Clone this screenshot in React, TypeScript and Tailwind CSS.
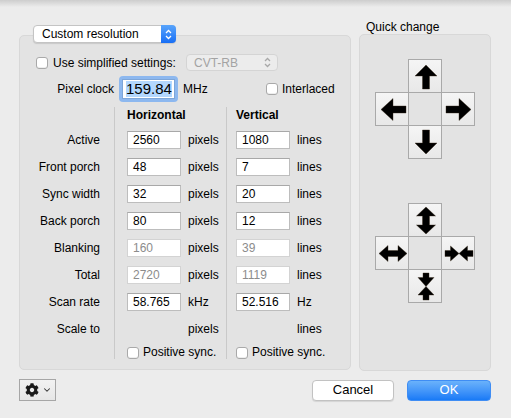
import { ChevronDown } from 'lucide-react'
import { FaCog } from 'react-icons/fa'

type Row = {
  label: string
  h?: string
  v?: string
  hUnit: string
  vUnit: string
  disabled?: boolean
}

const rows: Row[] = [
  { label: 'Active', h: '2560', v: '1080', hUnit: 'pixels', vUnit: 'lines' },
  { label: 'Front porch', h: '48', v: '7', hUnit: 'pixels', vUnit: 'lines' },
  { label: 'Sync width', h: '32', v: '20', hUnit: 'pixels', vUnit: 'lines' },
  { label: 'Back porch', h: '80', v: '12', hUnit: 'pixels', vUnit: 'lines' },
  { label: 'Blanking', h: '160', v: '39', hUnit: 'pixels', vUnit: 'lines', disabled: true },
  { label: 'Total', h: '2720', v: '1119', hUnit: 'pixels', vUnit: 'lines', disabled: true },
  { label: 'Scan rate', h: '58.765', v: '52.516', hUnit: 'kHz', vUnit: 'Hz' },
  { label: 'Scale to', hUnit: 'pixels', vUnit: 'lines' },
]

function Checkbox() {
  return (
    <span className="block w-[12px] h-[12px] shrink-0 rounded-[3px] bg-white border border-[#a9a9a9] shadow-[inset_0_-1px_0_#eeeeee]" />
  )
}

function Stepper({ color }: { color: string }) {
  return (
    <svg width="7" height="11" viewBox="0 0 7 11" fill="none" stroke={color} strokeWidth="1.3">
      <path d="M1 4 L3.5 1.5 L6 4" />
      <path d="M1 7 L3.5 9.5 L6 7" />
    </svg>
  )
}

function Field({ value, disabled }: { value?: string; disabled?: boolean }) {
  if (value === undefined) return <span className="block w-[54px] h-[18px]" />
  return (
    <span
      className={
        disabled
          ? 'flex items-center w-[54px] h-[18px] pl-[5px] bg-white border border-[#d3d3d3] text-[#8c8c8c]'
          : 'flex items-center w-[54px] h-[18px] pl-[5px] bg-white border border-[#bdbdbd] border-t-[#a8a8a8] text-black'
      }
    >
      {value}
    </span>
  )
}

// arrows drawn in a 34x33 button box
function Arrow({ kind }: { kind: string }) {
  const paths: Record<string, string> = {
    up: 'M17 5 L28 16 L20.5 16 L20.5 29 L13.5 29 L13.5 16 L6 16 Z',
    down: 'M17 28 L28 17 L20.5 17 L20.5 4 L13.5 4 L13.5 17 L6 17 Z',
    left: 'M5 16.5 L17 5.5 L17 13 L30 13 L30 20 L17 20 L17 27.5 Z',
    right: 'M29 16.5 L17 5.5 L17 13 L4 13 L4 20 L17 20 L17 27.5 Z',
    vgrow: 'M17 3 L26.5 12 L20.5 12 L20.5 21 L26.5 21 L17 30 L7.5 21 L13.5 21 L13.5 12 L7.5 12 Z',
    hgrow: 'M3 16.5 L12 8.5 L12 13.5 L22 13.5 L22 8.5 L31 16.5 L22 24.5 L22 19.5 L12 19.5 L12 24.5 Z',
    hshrink:
      'M17 16.5 L8.5 9 L8.5 13.5 L3 13.5 L3 19.5 L8.5 19.5 L8.5 24 Z M17 16.5 L25.5 9 L25.5 13.5 L31 13.5 L31 19.5 L25.5 19.5 L25.5 24 Z',
    vshrink:
      'M17 16.5 L9 7.5 L14 7.5 L14 3 L20 3 L20 7.5 L25 7.5 Z M17 16.5 L9 25 L14 25 L14 30 L20 30 L20 25 L25 25 Z',
  }
  return (
    <svg width="34" height="33" viewBox="0 0 34 33" className="block">
      <path d={paths[kind]} fill="#000" stroke="#3a2a1a" strokeWidth="0.4" />
    </svg>
  )
}

function ArrowButton({ kind, cls }: { kind: string; cls: string }) {
  return (
    <div
      className={`${cls} w-[34px] h-[34px] -mb-px -mr-px border border-[#a9a9a9] bg-gradient-to-b from-[#f5f5f5] to-[#e8e8e8] overflow-hidden`}
    >
      <Arrow kind={kind} />
    </div>
  )
}

function Cluster({ kinds }: { kinds: [string, string, string, string] }) {
  return (
    <div className="grid grid-cols-[33px_33px_33px] grid-rows-[33px_33px_33px] w-[100px]">
      <ArrowButton kind={kinds[0]} cls="col-start-2 row-start-1" />
      <ArrowButton kind={kinds[1]} cls="col-start-1 row-start-2" />
      <ArrowButton kind={kinds[2]} cls="col-start-3 row-start-2" />
      <ArrowButton kind={kinds[3]} cls="col-start-2 row-start-3" />
    </div>
  )
}

export default function App() {
  return (
    <div className="relative w-[511px] h-[418px] overflow-hidden bg-[#ececec] text-[12px] leading-[14px] text-black font-['Liberation_Sans',Arial,sans-serif]">
      <div className="absolute left-0 right-0 top-0 h-[7px] bg-gradient-to-b from-[#cdcdcd] to-[#ececec]" />

      <div className="flex items-start pl-[19px]">
        {/* left: timing settings */}
        <div className="w-[332px] pt-[25px]">
          <div className="relative z-10 ml-[14px] flex w-[143px] h-[18px] rounded-[4px] bg-white border border-[#c4c4c4] shadow-[0_1px_1px_rgba(0,0,0,0.12)]">
            <span className="flex-1 pl-[8px] flex items-center">Custom resolution</span>
            <span className="flex items-center justify-center w-[15px] -my-px -mr-px rounded-r-[4px] bg-gradient-to-b from-[#58a4fb] to-[#166ef5]">
              <Stepper color="#ffffff" />
            </span>
          </div>

          <div className="-mt-[8px] h-[335px] rounded-[5px] bg-[#e3e3e3] border border-[#d8d8d8]">
            <div className="flex items-center h-[17px] mt-[18px] pl-[16px]">
              <div className="flex items-center gap-[5px] w-[150px]">
                <Checkbox />
                <span>Use simplified settings:</span>
              </div>
              <div className="flex items-center justify-between w-[92px] h-[17px] pl-[7px] pr-[6px] rounded-[4px] bg-[#ececec] border border-[#d4d4d4] text-[#a3a3a3]">
                <span>CVT-RB</span>
                <Stepper color="#a8a8a8" />
              </div>
            </div>

            <div className="flex items-center h-[26px] mt-[5px]">
              <span className="w-[99px] pr-[5px] text-right">Pixel clock</span>
              <div className="w-[59px] h-[26px] rounded-[4px] bg-[#8db8ef] p-[3px]">
                <div className="flex items-center h-full pl-[3px] bg-white border border-[#7ea6d8]">
                  <span className="bg-[#b3d7fe] text-[15px] leading-[16px]">159.84</span>
                </div>
              </div>
              <span className="w-[88px] pl-[5px]">MHz</span>
              <Checkbox />
              <span className="ml-[4px]">Interlaced</span>
            </div>

            <div className="flex mt-[5px]">
              <div className="w-[94px] pr-[14px] text-right">
                <div className="h-[19px]" />
                {rows.map((r) => (
                  <div key={r.label} className="h-[27px] flex items-center justify-end">
                    {r.label}
                  </div>
                ))}
                <div className="h-[17px]" />
              </div>

              <div className="w-[112px] border-l border-[#c9c9c9] pl-[12px]">
                <div className="h-[19px] font-bold leading-[16px]">Horizontal</div>
                {rows.map((r) => (
                  <div key={r.label} className="h-[27px] flex items-center gap-[7px]">
                    <Field value={r.h} disabled={r.disabled} />
                    <span>{r.hUnit}</span>
                  </div>
                ))}
                <div className="h-[17px] flex items-end gap-[4px]">
                  <Checkbox />
                  <span className="leading-[13px]">Positive sync.</span>
                </div>
              </div>

              <div className="w-[110px] border-l border-[#c9c9c9] pl-[9px]">
                <div className="h-[19px] font-bold leading-[16px]">Vertical</div>
                {rows.map((r) => (
                  <div key={r.label} className="h-[27px] flex items-center gap-[7px]">
                    <Field value={r.v} disabled={r.disabled} />
                    <span>{r.vUnit}</span>
                  </div>
                ))}
                <div className="h-[17px] flex items-end gap-[4px]">
                  <Checkbox />
                  <span className="leading-[13px]">Positive sync.</span>
                </div>
              </div>
            </div>
          </div>
        </div>

        {/* right: quick change */}
        <div className="ml-[8px] w-[132px]">
          <div className="pt-[20px] h-[34px] pl-[7px]">Quick change</div>
          <div className="h-[337px] rounded-[5px] bg-[#e3e3e3] border border-[#d8d8d8] pl-[15px] pt-[24px]">
            <Cluster kinds={['up', 'left', 'right', 'down']} />
            <div className="h-[45px]" />
            <Cluster kinds={['vgrow', 'hgrow', 'hshrink', 'vshrink']} />
          </div>
        </div>
      </div>

      <div className="flex items-center mt-[8px] pl-[19px] pr-[20px]">
        <div className="flex items-center w-[37px] h-[22px] pl-[5px] gap-[3px] border border-[#a6a6a6] bg-gradient-to-b from-[#f2f2f2] to-[#e6e6e6]">
          <FaCog size={14} color="#1a1a1a" />
          <ChevronDown size={10} strokeWidth={2.5} color="#333" />
        </div>
        <div className="ml-auto flex items-center justify-center w-[82px] h-[21px] rounded-[4px] bg-white border border-[#c2c2c2] shadow-[0_1px_1px_rgba(0,0,0,0.1)] text-[13px]">
          Cancel
        </div>
        <div className="ml-[13px] flex items-center justify-center w-[84px] h-[21px] rounded-[4px] border border-[#3f8df4] bg-gradient-to-b from-[#6ab2fb] to-[#187af6] text-white text-[13px]">
          OK
        </div>
      </div>
    </div>
  )
}
